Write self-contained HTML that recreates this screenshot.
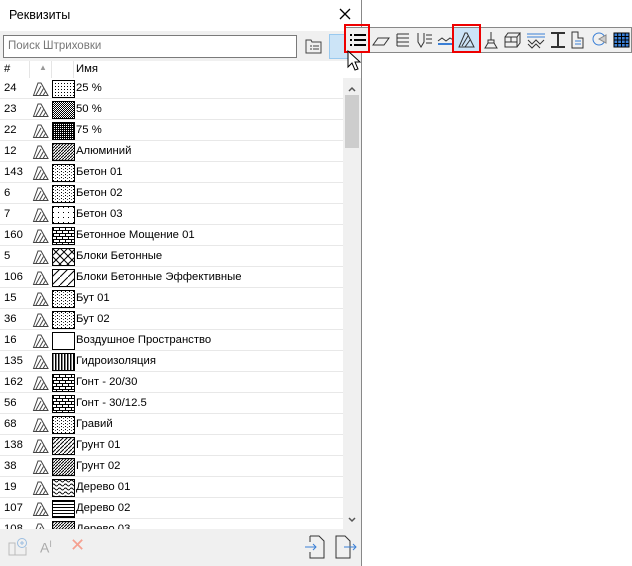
<!DOCTYPE html>
<html><head><meta charset="utf-8"><style>
*{margin:0;padding:0;box-sizing:border-box}
body{width:632px;height:566px;background:#fff;font-family:"Liberation Sans","DejaVu Sans",sans-serif;font-size:11.3px;color:#000;position:relative;overflow:hidden}
.panel{position:absolute;left:0;top:0;width:362px;height:566px;border-right:1px solid #888;background:#fff}
.title{position:absolute;left:9px;top:8px;font-size:12.5px}
.srow{position:absolute;left:0;top:31px;width:361px;height:30px;background:#f0f0f0}
.search{position:absolute;left:3px;top:35px;width:294px;height:23px;border:1px solid #7a7a7a;background:#fff;color:#777;font-size:11.5px;padding:4px 0 0 4px}
.hdr{position:absolute;left:0;top:61px;width:343px;height:17px;background:#fff}
.row{position:absolute;left:0;width:343px;height:21px;border-bottom:1px solid #e8e8e8}
.row .n{position:absolute;left:4px;top:4px}
.row .nm{position:absolute;left:76px;top:4px}
.row svg{position:absolute;top:2px}
.sb{position:absolute;left:343px;top:78px;width:18px;height:451px;background:#f0f0f0}
.foot{position:absolute;left:0;top:529px;width:361px;height:37px;background:#f0f0f0}
.tb{position:absolute;left:344px;top:27px;width:288px;height:26px;border:1px solid #888;background:#f0f0f0}
.red{position:absolute;border:2px solid #e00}
</style></head><body>
<svg width="0" height="0" style="position:absolute">
<defs>
<pattern id="p25" width="3" height="3" patternUnits="userSpaceOnUse"><rect width="1" height="1" fill="#000"/></pattern>
<pattern id="p50" width="2" height="2" patternUnits="userSpaceOnUse"><rect width="1" height="1" fill="#000"/><rect x="1" y="1" width="1" height="1" fill="#000"/></pattern>
<pattern id="p75" width="2" height="2" patternUnits="userSpaceOnUse"><rect width="2" height="2" fill="#000"/><rect width="1" height="1" fill="#fff"/></pattern>
<pattern id="diag" width="4" height="4" patternUnits="userSpaceOnUse"><path d="M0 4L4 0" stroke="#000" stroke-width="1"/></pattern>
<pattern id="diag2" width="3" height="3" patternUnits="userSpaceOnUse"><path d="M0 3L3 0" stroke="#000" stroke-width="1"/></pattern>
<pattern id="dots" width="4" height="3" patternUnits="userSpaceOnUse"><rect x="1" y="1" width="1" height="1" fill="#000"/><rect x="3" y="2" width="1" height="1" fill="#555"/></pattern>
<pattern id="sdots" width="5" height="5" patternUnits="userSpaceOnUse"><rect x="1" y="1" width="1" height="1" fill="#000"/></pattern>
<pattern id="brick" width="6" height="6" patternUnits="userSpaceOnUse"><path d="M0 .5H6M0 3.5H6M1.5 0V3M4.5 3V6" stroke="#000" fill="none"/></pattern>
<pattern id="cross" width="8" height="8" patternUnits="userSpaceOnUse"><path d="M0 0L8 8M8 0L0 8" stroke="#000"/></pattern>
<pattern id="wide" width="8" height="8" patternUnits="userSpaceOnUse"><path d="M0 8L8 0" stroke="#000"/></pattern>
<pattern id="vert" width="3" height="3" patternUnits="userSpaceOnUse"><rect width="1.5" height="3" fill="#000"/></pattern>
<pattern id="wave" width="6" height="4" patternUnits="userSpaceOnUse"><path d="M0 2Q1.5 0 3 2T6 2" stroke="#000" fill="none"/></pattern>
<pattern id="wood" width="8" height="3" patternUnits="userSpaceOnUse"><path d="M0 1.5H8" stroke="#000"/></pattern>
</defs></svg>
<div class="panel">
<div class="title">Реквизиты</div>
<svg style="position:absolute;left:339px;top:8px" width="12" height="12"><path d="M1 1L11 11M11 1L1 11" stroke="#000" stroke-width="1.3"/></svg>
<div class="srow"></div>
<div class="search">Поиск Штриховки</div>
<svg style="position:absolute;left:305px;top:38px" width="18" height="16"><path d="M1 2h5l1 2h9v11H1z" fill="none" stroke="#444"/><path d="M8 8h6M8 11h6M5 8h2M5 11h2" stroke="#444"/></svg>
<div style="position:absolute;left:329px;top:34px;width:20px;height:25px;background:#cce4f7;border:1px solid #99c9ef"></div>
<div class="hdr">
<span style="position:absolute;left:4px;top:2px">#</span>
<span style="position:absolute;left:39px;top:2px;color:#999;font-size:8px">▲</span>
<span style="position:absolute;left:76px;top:2px">Имя</span>
<div style="position:absolute;left:29px;top:0;width:1px;height:17px;background:#e5e5e5"></div>
<div style="position:absolute;left:51px;top:0;width:1px;height:17px;background:#e5e5e5"></div>
<div style="position:absolute;left:73px;top:0;width:1px;height:17px;background:#e5e5e5"></div>
</div>
<div id="rows"></div>
<div class="sb">
<svg style="position:absolute;left:5px;top:8px" width="8" height="6"><path d="M1 5L4 2 7 5" fill="none" stroke="#555" stroke-width="1.5"/></svg>
<div style="position:absolute;left:2px;top:17px;width:14px;height:53px;background:#cdcdcd"></div>
<svg style="position:absolute;left:5px;top:439px" width="8" height="6"><path d="M1 1L4 4 7 1" fill="none" stroke="#555" stroke-width="1.5"/></svg>
</div>
<div class="foot">
<svg style="position:absolute;left:8px;top:8px" width="20" height="20"><path d="M1 6h6v12H1zM1 6v12h17V10" fill="none" stroke="#bbb"/><circle cx="14" cy="6" r="4.5" fill="none" stroke="#9bbde0"/><path d="M14 4v4M12 6h4" stroke="#9bbde0"/></svg>
<span style="position:absolute;left:40px;top:10px;color:#aaa;font-size:14px">A<sup style="font-size:9px">I</sup></span>
<span style="position:absolute;left:70px;top:6px;color:#f5a090;font-size:18px">✕</span>
<svg style="position:absolute;left:304px;top:6px" width="22" height="24"><path d="M6 1h9l5 5v17H6v-6M6 1v6" fill="none" stroke="#333"/><path d="M1 12h11M9 9l3 3-3 3" fill="none" stroke="#3a7fd6"/></svg>
<svg style="position:absolute;left:334px;top:6px" width="24" height="24"><path d="M2 1h9l5 5v17H2z" fill="none" stroke="#333"/><path d="M10 12h12M19 9l3 3-3 3" fill="none" stroke="#3a7fd6"/></svg>
</div>
</div>
<div class="tb">
<svg style="position:absolute;left:4px;top:4px" width="18" height="16"><path d="M1 3h2M1 8h2M1 13h2M5 3h12M5 8h12M5 13h12" stroke="#000" stroke-width="2"/></svg>
<svg style="position:absolute;left:27px;top:4px" width="18" height="16"><path d="M1 13l5-7h11l-5 7z" fill="none" stroke="#333"/></svg>
<svg style="position:absolute;left:49px;top:3px" width="18" height="18"><path d="M3 3h12M3 7h12M3 11h12M3 15h12M3 3v12" fill="none" stroke="#333"/></svg>
<svg style="position:absolute;left:71px;top:3px" width="20" height="18"><path d="M2 2v9l3 5 3-5V2M10 4h6M10 8h6M10 12h6" fill="none" stroke="#333"/></svg>
<svg style="position:absolute;left:92px;top:3px" width="20" height="18"><path d="M1 10l4-3 4 3 4-3 5 3" fill="none" stroke="#333"/><path d="M1 13h18" stroke="#3a7fd6" stroke-width="2"/></svg>
<div style="position:absolute;left:108px;top:0;width:26px;height:24px;background:#cce4f7"></div>
<svg style="position:absolute;left:112px;top:3px" width="18" height="18"><path d="M2 16L8 2h2l7 14z" fill="none" stroke="#333"/><path d="M5 15l6-10M8 16l5-7" stroke="#333"/></svg>
<svg style="position:absolute;left:137px;top:3px" width="18" height="18"><path d="M9 1v8M6 9h6v3H6zM3 17h12l-3-5H6z" fill="none" stroke="#333"/></svg>
<svg style="position:absolute;left:158px;top:3px" width="18" height="18"><path d="M2 6h12v10H2zM2 6l3-4h12l-3 4M14 16l3-4V2M2 11h12M8 6v5" fill="none" stroke="#333"/></svg>
<svg style="position:absolute;left:181px;top:3px" width="20" height="18"><path d="M1 3h18M1 6h18" stroke="#3a7fd6"/><path d="M2 9l4 4 4-4 4 4 4-4M2 13l4 4 4-4 4 4" fill="none" stroke="#333"/></svg>
<svg style="position:absolute;left:204px;top:3px" width="18" height="18"><path d="M2 2h14M2 16h14M9 2v14" fill="none" stroke="#333" stroke-width="2"/></svg>
<svg style="position:absolute;left:225px;top:3px" width="18" height="18"><path d="M2 1h6v6h5v10H2z" fill="none" stroke="#333"/><path d="M5 10h6M5 13h6" stroke="#3a7fd6"/></svg>
<svg style="position:absolute;left:246px;top:3px" width="18" height="18"><circle cx="8" cy="8" r="6" fill="none" stroke="#3a7fd6"/><path d="M8 8l7-4v8z" fill="#ccc" stroke="#888"/></svg>
<svg style="position:absolute;left:268px;top:3px" width="18" height="18"><rect x="1" y="2" width="15" height="14" fill="#3a7fd6"/><path d="M1 2h15v14H1zM1 5.5h15M1 9h15M1 12.5h15M4.7 2v14M8.5 2v14M12.2 2v14" fill="none" stroke="#000"/></svg>
</div>
<div class="red" style="left:344px;top:24px;width:26px;height:29px"></div>
<div class="red" style="left:452px;top:24px;width:29px;height:29px"></div>
<svg style="position:absolute;left:347px;top:50px" width="14" height="22"><path d="M1 1v16l4-4 3 7 3-1-3-7h5z" fill="#fff" stroke="#000"/></svg>
<script>
var d=[["24","p25","25 %"],["23","p50","50 %"],["22","p75","75 %"],["12","diag2","Алюминий"],["143","dots","Бетон 01"],["6","dots","Бетон 02"],["7","sdots","Бетон 03"],["160","brick","Бетонное Мощение 01"],["5","cross","Блоки Бетонные"],["106","wide","Блоки Бетонные Эффективные"],["15","dots","Бут 01"],["36","dots","Бут 02"],["16","","Воздушное Пространство"],["135","vert","Гидроизоляция"],["162","brick","Гонт - 20/30"],["56","brick","Гонт - 30/12.5"],["68","dots","Гравий"],["138","diag","Грунт 01"],["38","diag2","Грунт 02"],["19","wave","Дерево 01"],["107","wood","Дерево 02"],["108","diag2","Дерево 03"]];
var h="";d.forEach(function(r,i){var t=78+21*i;h+='<div class="row" style="top:'+t+'px"><span class="n">'+r[0]+'</span><svg style="left:32px" width="17" height="17"><path d="M1.5 15.5L6 3h3l7 12.5z" fill="none" stroke="#444"/><path d="M4 15l5-9M7.5 15.5l4-7M11 15.5l2.5-4" stroke="#444"/></svg><svg style="left:52px" width="23" height="18"><rect x="0.5" y="0.5" width="22" height="17" fill="'+(r[1]?'url(#'+r[1]+')':'#fff')+'" stroke="#000"/></svg><span class="nm">'+r[2]+'</span></div>';});
var e=document.getElementById("rows");e.style.cssText="position:absolute;left:0;top:0;width:343px;height:529px;overflow:hidden";e.innerHTML=h;
</script>
</body></html>
